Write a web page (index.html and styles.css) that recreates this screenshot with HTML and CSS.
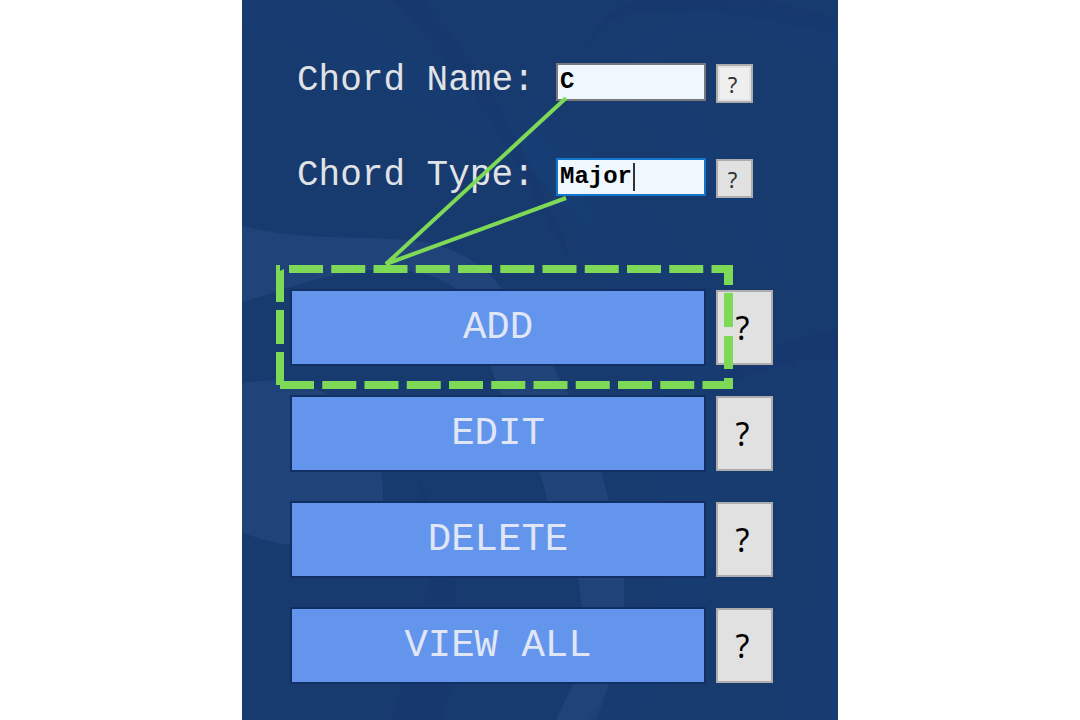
FILE: index.html
```html
<!DOCTYPE html>
<html lang="en">
<head>
<meta charset="utf-8">
<meta name="viewport" content="width=device-width, initial-scale=1">
<title>Chords</title>
<link rel="stylesheet" href="styles.css">
</head>
<body>
<main class="panel">
  <svg class="backdrop" viewBox="0 0 596 720" preserveAspectRatio="none" aria-hidden="true">
    <path class="swirl-light" d="M0 226C70 243 130 234 180 242C225 250 245 270 260 289C285 315 302 340 311 366L327 396C342 422 353 448 360 473L367 502C377 530 382 555 382 579V606C382 630 376 660 368 682L354 720H314L332 682C340 658 342 630 340 606L336 579C330 553 319 525 306 502L298 473C292 445 273 420 260 396L248 366C243 335 233 310 215 290C190 268 145 268 110 272C70 278 30 294 0 302Z"/>
    <path class="swirl-light" d="M0 384C30 376 65 382 88 396C118 414 136 444 139 473C146 505 136 530 110 540C85 550 35 548 0 532Z"/>
    <path class="swirl-blue" d="M596 22C500-8 410 2 385 65C377 105 435 155 470 195C520 255 550 305 590 335L570 320C545 290 525 225 500 170C470 130 405 85 420 45C435 10 530 30 596 65Z"/>
    <path class="swirl-blue" d="M290 95C335 135 365 165 430 240L450 290L475 390V510C478 600 440 660 390 720H340C410 650 435 590 420 500V380L350 260L280 150Z"/>
    <path class="swirl-blue" d="M0 0H70C150 55 260 90 330 170L350 230C270 140 120 75 0 25Z"/>
    <path class="swirl-dark" d="M343 60C350 0 430-4 596 35V20C440-30 350-10 343 60Z"/>
    <path class="swirl-dark" d="M180 0C245 70 280 145 330 260L315 240C270 150 230 80 150 0Z"/>
    <path class="swirl-dark" d="M596 330C550 338 500 350 475 390C515 365 560 360 596 360Z"/>
    <path class="swirl-dark" d="M170 470C215 560 165 650 150 720H200C225 650 225 555 170 470Z"/>
    <path class="swirl-blue" d="M555 360H596V720H540C590 600 580 460 555 360Z"/>
  </svg>

  <form class="editor">
    <div class="fields">
      <div class="field">
        <label class="field-label" for="chord-name">Chord Name:</label>
        <span class="entry"><input class="entry-input" id="chord-name" type="text" value="C"></span>
        <button class="help help-small help-hover" type="button" aria-label="Chord name help">?</button>
      </div>
      <div class="field">
        <label class="field-label" for="chord-type">Chord Type:</label>
        <span class="entry entry-active"><input class="entry-input" id="chord-type" type="text" value="Major"></span>
        <button class="help help-small" type="button" aria-label="Chord type help">?</button>
      </div>
    </div>

    <div class="actions">
      <div class="action-row"><button class="action" type="button">ADD</button><button class="help" type="button" aria-label="Add help">?</button></div>
      <div class="action-row"><button class="action" type="button">EDIT</button><button class="help" type="button" aria-label="Edit help">?</button></div>
      <div class="action-row"><button class="action" type="button">DELETE</button><button class="help" type="button" aria-label="Delete help">?</button></div>
      <div class="action-row"><button class="action" type="button">VIEW ALL</button><button class="help" type="button" aria-label="View all help">?</button></div>
    </div>
  </form>

  <svg class="callout" viewBox="0 0 596 720" aria-hidden="true">
    <path class="pointer" d="M324 98L144 264L324 198"/>
    <path class="dash" d="M47 269H487" stroke-dasharray="34 8.25"/>
    <path class="dash" d="M38 385H487" stroke-dasharray="34 8.25"/>
    <path class="frame" d="M34 265H38V271L42 269V302H34ZM34 310H42V344H34ZM34 352H42V389H38V385H34Z"/>
    <path class="frame" d="M482 265H491V285H482ZM482 293H491V327H482ZM482 336H491V369H482ZM482 378H491V389H482Z"/>
  </svg>
</main>
</body>
</html>
```

FILE: styles.css
```css
* {
  box-sizing: border-box;
}

body {
  margin: 0;
  background: #fff;
}

.panel {
  position: relative;
  max-width: 596px;
  min-height: 100vh;
  margin: 0 auto;
  padding: 63px 65px 36px 48px;
  background: #173a6f;
  overflow: hidden;
}

.backdrop {
  position: absolute;
  inset: 0;
  width: 100%;
  height: 100%;
}

.swirl-light { fill: #20447a; }
.swirl-blue { fill: #184279; opacity: 0.4; }
.swirl-dark { fill: #14346a; opacity: 0.25; }

.editor {
  position: relative;
  display: flex;
  flex-direction: column;
  gap: 91px;
}

.fields {
  display: flex;
  flex-direction: column;
  gap: 55px;
  padding: 0 20px 0 7px;
}

.field {
  display: flex;
  align-items: flex-start;
  height: 40px;
}

.field-label {
  flex: 1;
  color: #e0e3e6;
  font: 36px/36px "Liberation Mono", monospace;
  white-space: nowrap;
}

.entry {
  position: relative;
  flex: none;
  width: 150px;
  margin-right: 10px;
}

.entry-input {
  display: block;
  width: 100%;
  height: 38px;
  padding: 0 2px 2px;
  border: 2px solid #77797c;
  border-radius: 0;
  outline: 0;
  background: #f0f8ff;
  color: #000;
  font: bold 24px/32px "Liberation Mono", monospace;
}

.entry-active .entry-input {
  border-color: #1475cd;
}

.entry-active::after {
  content: "";
  position: absolute;
  top: 5px;
  left: 77px;
  width: 2px;
  height: 28px;
  background: #333;
}

.actions {
  display: flex;
  flex-direction: column;
  gap: 29px;
}

.action-row {
  display: flex;
  align-items: center;
  gap: 10px;
}

.action {
  flex: 1;
  height: 77px;
  padding: 0;
  border: 2px solid #122f63;
  border-radius: 0;
  background: #6495ed;
  color: #e0e6f6;
  font: 39px/44px "Liberation Mono", monospace;
}

.help {
  flex: none;
  width: 57px;
  height: 75px;
  padding: 0 4px 0 0;
  border: 2px solid #adadad;
  border-radius: 0;
  background: #e1e1e1;
  color: #000;
  font: 32px/40px "Noto Sans", "Open Sans", sans-serif;
}

.help-small {
  align-self: flex-end;
  width: 37px;
  height: 39px;
  color: #333;
  font-size: 22px;
  line-height: 28px;
}

.help-hover {
  background: #efefef;
  box-shadow: inset 0 0 0 2px #e3e3e3;
}

.callout {
  position: absolute;
  top: 0;
  left: 0;
  width: 596px;
  height: 720px;
  pointer-events: none;
}

.pointer {
  fill: none;
  stroke: #7ed957;
  stroke-width: 4;
  stroke-linejoin: bevel;
}

.dash {
  stroke: #7ed957;
  stroke-width: 8;
}

.frame {
  fill: #7ed957;
}
```
